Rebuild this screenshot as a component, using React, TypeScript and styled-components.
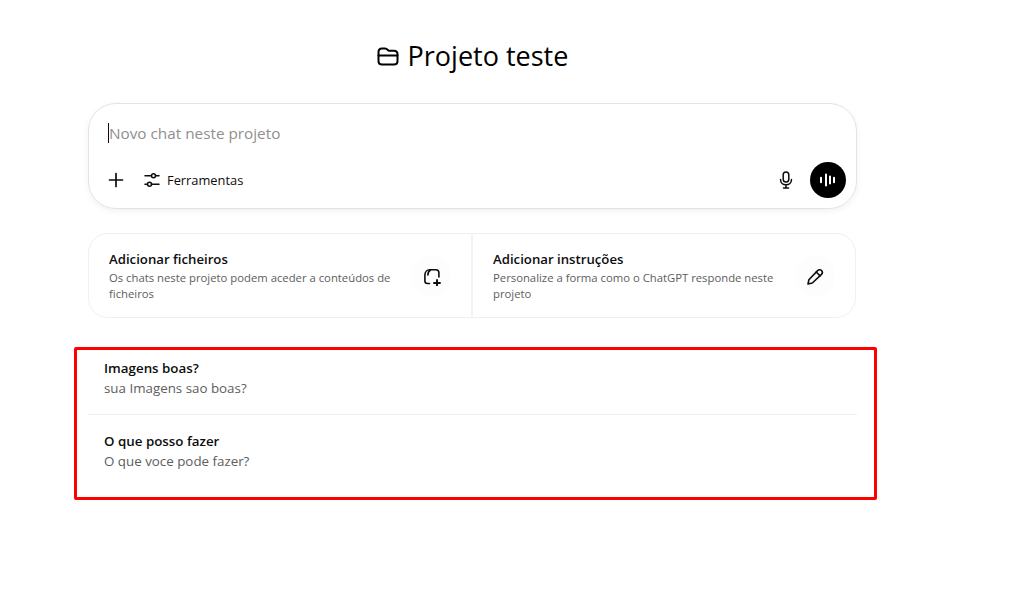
import * as React from 'react'
import styled, { createGlobalStyle } from 'styled-components'

const GlobalStyle = createGlobalStyle`
	html, body {
		margin: 0;
		background: #fff;
		color: #0d0d0d;
		font-family: 'Open Sans', 'Noto Sans', sans-serif;
	}
`

const Page = styled.div`
	width: 1025px;
	height: 591px;
	overflow: hidden;
	padding: 37px 0 0 88px;
	box-sizing: border-box;
`

const Column = styled.main`
	width: 769px;
	display: flex;
	flex-direction: column;
`

const Title = styled.h1`
	margin: 0 0 29px;
	height: 37px;
	display: flex;
	align-items: center;
	justify-content: center;
	gap: 7px;
	font-size: 27px;
	font-weight: 400;
	line-height: 37px;
	color: #000;
`

const Composer = styled.section`
	height: 106px;
	box-sizing: border-box;
	border: 1px solid #e3e3e3;
	border-radius: 28px;
	box-shadow: 0 2px 6px rgba(0, 0, 0, 0.06);
	padding: 19px 10px 10px 19px;
	display: flex;
	flex-direction: column;
	justify-content: space-between;
`

const Placeholder = styled.div`
	align-self: flex-start;
	border-left: 1px solid #0d0d0d;
	height: 20px;
	line-height: 20px;
	font-size: 15.3px;
	color: #8f8f8f;
`

const Toolbar = styled.div`
	display: flex;
	align-items: center;
	justify-content: space-between;
`

const ToolGroup = styled.div<{ $gap: number }>`
	display: flex;
	align-items: center;
	gap: ${(p) => p.$gap}px;
`

const ToolLabel = styled.span`
	font-size: 12.85px;
	color: #0d0d0d;
	margin-left: -12px;
`

const PlusSlot = styled.span`
	display: flex;
	margin-left: -1px;
`

const VoiceButton = styled.button`
	width: 36px;
	height: 36px;
	border: 0;
	padding: 0;
	border-radius: 50%;
	background: #000;
	color: #fff;
	display: flex;
	align-items: center;
	justify-content: center;
`

const Cards = styled.section`
	margin-top: 24px;
	margin-right: 1px;
	height: 85px;
	box-sizing: border-box;
	border: 1px solid #f0f0f0;
	border-radius: 20px;
	display: grid;
	grid-template-columns: 384px 1fr;
`

const Card = styled.div<{ $divided?: boolean }>`
	display: flex;
	align-items: center;
	justify-content: space-between;
	padding: 0 20px 0 20px;
	${(p) => p.$divided && 'border-right: 2px solid #f3f3f3;'}
`

const CardText = styled.div`
	width: 290px;
`

const CardTitle = styled.div`
	font-size: 13.2px;
	line-height: 18px;
	font-weight: 600;
	color: #0d0d0d;
	margin-bottom: 2px;
`

const CardSub = styled.div`
	font-size: 11.3px;
	line-height: 16px;
	color: #5d5d5d;
`

const IconCircle = styled.div`
	width: 40px;
	height: 40px;
	border-radius: 50%;
	background: #fdfdfd;
	display: flex;
	align-items: center;
	justify-content: center;
	color: #0d0d0d;
`

const ChatList = styled.section`
	position: relative;
	margin-top: 29px;
`

const Highlight = styled.div`
	position: absolute;
	top: 0;
	left: -14px;
	width: 803px;
	height: 153px;
	box-sizing: border-box;
	border: 3px solid #f00;
	border-radius: 2px;
	pointer-events: none;
`

const ChatRow = styled.div<{ $divided?: boolean }>`
	padding: ${(p) => (p.$divided ? '11px 16px 16px' : '16px 16px 0')};
	${(p) => p.$divided && 'border-bottom: 1px solid #f0f0f0;'}
`

const ChatTitle = styled.div`
	font-size: 13.35px;
	line-height: 20px;
	font-weight: 600;
	color: #0d0d0d;
`

const ChatSub = styled.div`
	font-size: 13.35px;
	line-height: 20px;
	color: #5d5d5d;
`

const FolderIcon = () => (
	<svg width="24" height="24" viewBox="0 0 24 24" fill="none" stroke="currentColor" strokeWidth="2" strokeLinejoin="round" strokeLinecap="round">
		<path d="M1.500 8c0-2.200 1.300-3.500 3.500-3.500h3c1.200 0 1.800.4 2.500 1.200l.5.6c.3.3.6.4 1.100.4H17c2.200 0 3.500 1.300 3.500 3.500V17c0 2.200-1.300 3.500-3.500 3.500H5c-2.200 0-3.500-1.300-3.500-3.500z" />
		<path d="M1.500 11.500h19" />
	</svg>
)

const PlusIcon = () => (
	<svg width="18" height="18" viewBox="0 0 18 18" fill="none" stroke="currentColor" strokeWidth="1.7" strokeLinecap="round">
		<path d="M9 2.500v13M2.500 9h13" />
	</svg>
)

const SlidersIcon = () => (
	<svg width="16" height="16" viewBox="0 0 16 16" fill="none" stroke="currentColor" strokeWidth="1.5" strokeLinecap="round">
		<path d="M1 3.700h6.500M11.500 3.700H15M1 12.300h2.500M7.500 12.300H15" />
		<circle cx="9.500" cy="3.700" r="2" />
		<circle cx="5.500" cy="12.300" r="2" />
	</svg>
)

const MicIcon = () => (
	<svg width="20" height="20" viewBox="0 0 20 20" fill="none" stroke="currentColor" strokeWidth="1.500" strokeLinecap="round">
		<rect x="7.200" y="2" width="5.600" height="10" rx="2.800" />
		<path d="M4.500 9.500c0 3.200 2.400 5.300 5.500 5.300s5.500-2.100 5.500-5.300M10 15v3M7.500 18h5" />
	</svg>
)

const WaveIcon = () => (
	<svg width="20" height="20" viewBox="0 0 20 20" fill="none" stroke="currentColor" strokeWidth="2" strokeLinecap="round">
		<path d="M3 7.800v4.400M8 4.500v11M12 6.500v7M16 7.800v4.400" />
	</svg>
)

const FilePlusIcon = () => (
	<svg width="20" height="20" viewBox="0 0 20 20" fill="none" stroke="currentColor" strokeWidth="1.600" strokeLinecap="round" strokeLinejoin="round">
		<path d="M8.500 17.500h-2c-1.500 0-2.600-1-2.600-2.500V9c0-3 2-5.200 5-5.200h6c1.900 0 3 1.100 3 3V11" />
		<path d="M9.500 4c-1.700 1-2.600 3-2.600 5" />
		<path d="M16 14v6M13 17h6" strokeWidth="1.900" />
	</svg>
)

const PencilIcon = () => (
	<svg width="20" height="20" viewBox="0 0 20 20" fill="none" stroke="currentColor" strokeWidth="1.600" strokeLinecap="round" strokeLinejoin="round">
		<path d="M3 18l.9-4.300 8.700-9.100c1.100-1.200 2.800-1.200 3.900-.1s1.100 2.700 0 3.900L7.300 17z" />
		<path d="M11.200 6l3.900 3.900" />
	</svg>
)

export default function App() {
	return (
		<Page>
			<GlobalStyle />
			<Column>
				<Title>
					<FolderIcon />
					Projeto teste
				</Title>
				<Composer>
					<Placeholder>Novo chat neste projeto</Placeholder>
					<Toolbar>
						<ToolGroup $gap={19}>
							<PlusSlot>
								<PlusIcon />
							</PlusSlot>
							<SlidersIcon />
							<ToolLabel>Ferramentas</ToolLabel>
						</ToolGroup>
						<ToolGroup $gap={14}>
							<MicIcon />
							<VoiceButton>
								<WaveIcon />
							</VoiceButton>
						</ToolGroup>
					</Toolbar>
				</Composer>
				<Cards>
					<Card $divided>
						<CardText>
							<CardTitle>Adicionar ficheiros</CardTitle>
							<CardSub>Os chats neste projeto podem aceder a conteúdos de ficheiros</CardSub>
						</CardText>
						<IconCircle>
							<FilePlusIcon />
						</IconCircle>
					</Card>
					<Card>
						<CardText>
							<CardTitle>Adicionar instruções</CardTitle>
							<CardSub>Personalize a forma como o ChatGPT responde neste projeto</CardSub>
						</CardText>
						<IconCircle>
							<PencilIcon />
						</IconCircle>
					</Card>
				</Cards>
				<ChatList>
					<Highlight />
					<ChatRow $divided>
						<ChatTitle>Imagens boas?</ChatTitle>
						<ChatSub>sua Imagens sao boas?</ChatSub>
					</ChatRow>
					<ChatRow>
						<ChatTitle>O que posso fazer</ChatTitle>
						<ChatSub>O que voce pode fazer?</ChatSub>
					</ChatRow>
				</ChatList>
			</Column>
		</Page>
	)
}
